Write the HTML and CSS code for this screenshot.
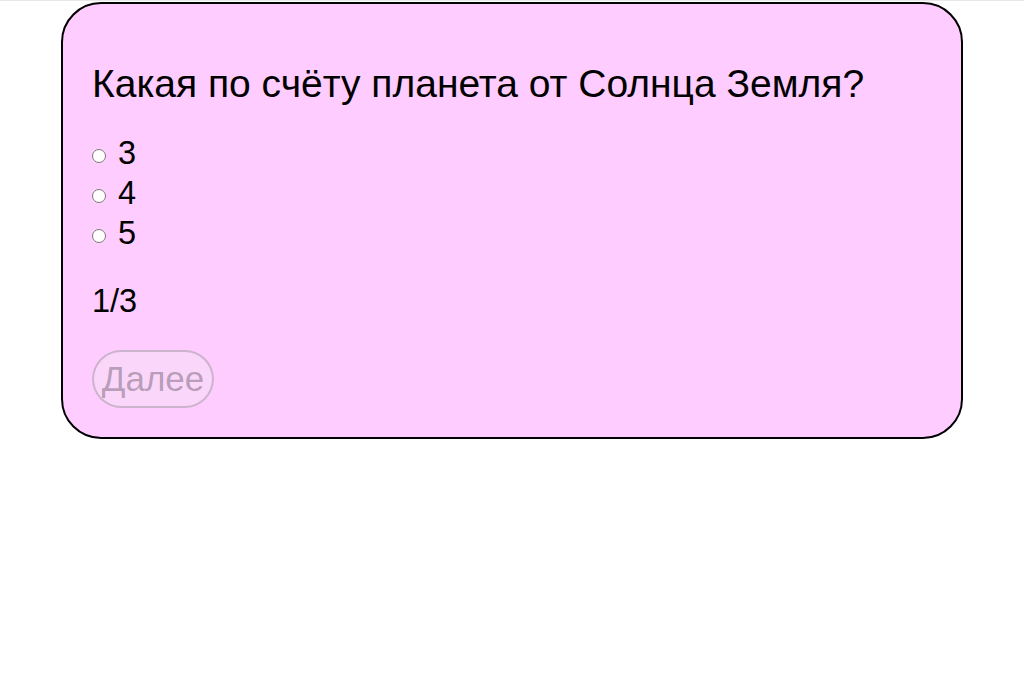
FILE: index.html
```html
<!DOCTYPE html>
<html lang="ru">
<head>
<meta charset="utf-8">
<title>Quiz</title>
<link rel="stylesheet" href="styles.css">
</head>
<body>
<div class="card">
  <h1 class="question">Какая по счёту планета от Солнца Земля?</h1>
  <div class="options">
    <label class="option"><input type="radio" name="a" class="radio"><span>3</span></label>
    <label class="option"><input type="radio" name="a" class="radio"><span>4</span></label>
    <label class="option"><input type="radio" name="a" class="radio"><span>5</span></label>
  </div>
  <div class="counter">1/3</div>
  <button class="next" disabled>Далее</button>
</div>
</body>
</html>
```
FILE: styles.css
```css
html, body {
  margin: 0;
  padding: 0;
  background: #ffffff;
}
body {
  border-top: 1px solid #e8e8e8;
  padding-top: 1px;
  font-family: "Liberation Sans", Arial, sans-serif;
  color: #000;
}
.card {
  margin: 0 auto;
  box-sizing: content-box;
  background: #ffccff;
  border: 2px solid #000;
  border-radius: 40px;
  padding: 57px 0 29px 29px;
  width: 869px;
}
.question {
  margin: 0;
  font-size: 39px;
  font-weight: normal;
  line-height: 45px;
}
.options {
  margin-top: 27px;
  display: flex;
  flex-direction: column;
}
.option {
  font-size: 32.5px;
  line-height: 40px;
  display: flex;
  align-items: center;
}
.radio {
  margin: 6px 12px 0 0;
  width: 14px;
  height: 14px;
}
.counter {
  margin-top: 28px;
  font-size: 32.5px;
  line-height: 40px;
}
.next {
  margin-top: 29px;
  display: block;
  height: 58px;
  width: 122px;
  padding: 0;
  font-family: "Liberation Sans", Arial, sans-serif;
  font-size: 35px;
  color: rgba(16, 16, 16, 0.3);
  background: rgba(239, 239, 239, 0.3);
  border: 2px solid rgba(100, 100, 100, 0.3);
  border-radius: 29px;
}
```
